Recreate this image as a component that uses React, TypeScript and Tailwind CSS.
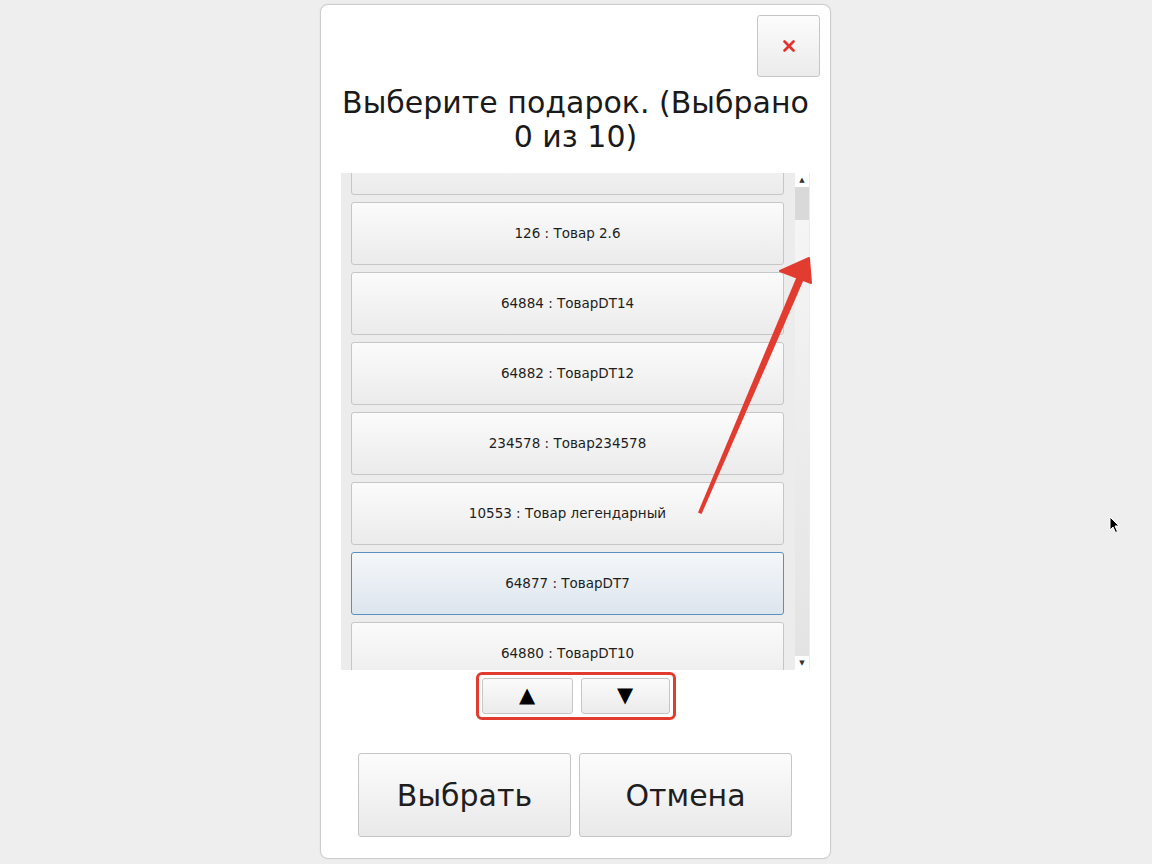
import React from 'react';

const font = { fontFamily: '"DejaVu Sans", "Noto Sans", sans-serif' };

const items = [
  { id: 'top', label: '' },
  { id: '126', label: '126 : Товар 2.6' },
  { id: '64884', label: '64884 : ТоварDT14' },
  { id: '64882', label: '64882 : ТоварDT12' },
  { id: '234578', label: '234578 : Товар234578' },
  { id: '10553', label: '10553 : Товар легендарный' },
  { id: '64877', label: '64877 : ТоварDT7', selected: true },
  { id: '64880', label: '64880 : ТоварDT10' },
];

function ListItem({ label, selected }: { label: string; selected?: boolean }) {
  return (
    <div
      className={`h-[63px] shrink-0 flex items-center justify-center rounded-[3px] border text-[13.5px] text-[#1e1e1e] ${
        selected
          ? 'border-[#5b8fbf] bg-gradient-to-b from-[#f4f7fa] to-[#dde5ed]'
          : 'border-[#c6c6c6] bg-gradient-to-b from-[#fbfbfb] to-[#ebebeb]'
      }`}
    >
      {label}
    </div>
  );
}

export default function App() {
  return (
    <div className="relative w-[1152px] h-[864px] bg-[#eeeeee] overflow-hidden pt-[4px]" style={font}>
      {/* Dialog */}
      <div className="ml-[320px] w-[511px] h-[855px] bg-white border border-[#cdcdcd] rounded-[8px] flex flex-col shadow-[0_0_2px_rgba(0,0,0,0.08)]">
        <div className="flex justify-end pt-[10px] pr-[10px]">
          <button className="w-[63px] h-[62px] rounded-[3px] border border-[#c6c6c6] bg-gradient-to-b from-[#fcfcfc] to-[#ebebeb] flex items-center justify-center">
            <svg width="12" height="12" viewBox="0 0 12 12">
              <path d="M1.5 1.5 L10.5 10.5 M10.5 1.5 L1.5 10.5" stroke="#e3322c" strokeWidth="2.6" strokeLinecap="round" />
            </svg>
          </button>
        </div>

        <div className="mt-[9px] text-center text-[30px] leading-[34px] text-[#1a1a1a] whitespace-nowrap">
          Выберите подарок. (Выбрано
          <br />
          0 из 10)
        </div>

        {/* List */}
        <div className="mt-[19px] mx-[20px] h-[497px] bg-[#ececec] flex overflow-hidden">
          <div className="w-[443px] pl-[10px] overflow-hidden">
            <div className="flex flex-col gap-[7px] -mt-[41px]">
              {items.map((it) => (
                <ListItem key={it.id} label={it.label} selected={it.selected} />
              ))}
            </div>
          </div>
          <div className="ml-[11px] w-[14px] h-full flex flex-col bg-gradient-to-b from-[#f7f7f7] to-[#e3e3e3]">
            <div className="h-[14px] flex items-center justify-center text-[7px] text-[#333] bg-white">▲</div>
            <div className="h-[33px] bg-[#d9d9d9]" />
            <div className="flex-1" />
            <div className="h-[14px] flex items-center justify-center text-[7px] text-[#333] bg-white">▼</div>
          </div>
        </div>

        {/* Scroll buttons */}
        <div className="mt-[2px] self-center border-[3px] border-[#e23b30] rounded-[6px] p-[3px] flex gap-[8px]">
          <button className="w-[91px] h-[36px] rounded-[3px] border border-[#c6c6c6] bg-gradient-to-b from-[#fbfbfb] to-[#ebebeb] flex items-center justify-center text-[21px] text-black">
            ▲
          </button>
          <button className="w-[89px] h-[36px] rounded-[3px] border border-[#c6c6c6] bg-gradient-to-b from-[#fbfbfb] to-[#ebebeb] flex items-center justify-center text-[21px] text-black">
            ▼
          </button>
        </div>

        {/* Actions */}
        <div className="mt-[33px] flex justify-center gap-[8px] pr-[1px]">
          <button className="w-[213px] h-[84px] rounded-[3px] border border-[#c6c6c6] bg-gradient-to-b from-[#fcfcfc] to-[#e9e9e9] text-[30px] text-[#1e1e1e]">
            Выбрать
          </button>
          <button className="w-[213px] h-[84px] rounded-[3px] border border-[#c6c6c6] bg-gradient-to-b from-[#fcfcfc] to-[#e9e9e9] text-[30px] text-[#1e1e1e]">
            Отмена
          </button>
        </div>
      </div>

      {/* Annotation arrow */}
      <svg className="absolute left-0 top-0 pointer-events-none" width="1152" height="864">
        <polygon points="698,512.5 701.6,514 804,279 797,276" fill="#e23b30" />
        <polygon points="809,258 780,271 811,283" fill="#e23b30" strokeLinejoin="round" stroke="#e23b30" strokeWidth="2" />
      </svg>

      {/* Cursor */}
      <svg className="absolute left-[1109px] top-[516px]" width="12" height="19" viewBox="0 0 12 19">
        <path d="M1 1 L1 14 L4 11 L6.5 16.5 L8.5 15.5 L6 10 L10 10 Z" fill="#000" stroke="#fff" strokeWidth="1" />
      </svg>
    </div>
  );
}
